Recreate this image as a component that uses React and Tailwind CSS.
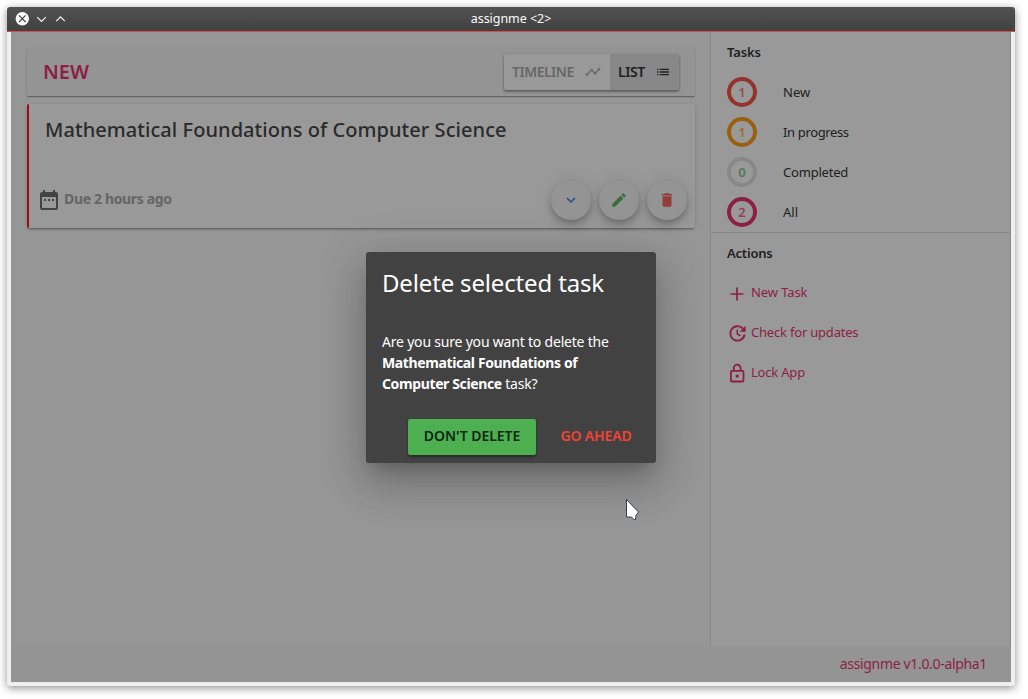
import React from "react";
import { MdTimeline, MdDateRange, MdDelete, MdEdit, MdList } from "react-icons/md";

const tasks = [
  { n: 1, label: "New", ring: "border-[#f44336]", text: "text-[#f44336]" },
  { n: 1, label: "In progress", ring: "border-[#ff9800]", text: "text-[#ff9800]", spacing: "tracking-[-0.36px]" },
  { n: 0, label: "Completed", ring: "border-[#e0e0e0]", text: "text-[#4caf50]", spacing: "tracking-[-0.2px]" },
  { n: 2, label: "All", ring: "border-[#e91e63]", text: "text-[#e91e63]" },
];

const fab =
  "flex h-10 w-10 items-center justify-center rounded-full bg-[#f5f5f5] shadow-[0_3px_5px_-1px_rgba(0,0,0,.2),0_6px_10px_rgba(0,0,0,.14),0_1px_18px_rgba(0,0,0,.12)]";

function TitleBar() {
  return (
    <div className="flex h-[25px] shrink-0 items-center rounded-t-[3px] border-b border-[#dc4b43] bg-linear-to-b from-[#525252] to-[#414141] pl-2">
      <div className="flex w-[52px] items-center gap-[6px]">
        <svg className="h-[14px] w-[14px] shrink-0" viewBox="0 0 14 14">
          <circle cx="7.3" cy="6.7" r="6.700" fill="#fcfcfc" />
          <path d="M4 3.400l6.600 6.600M10.600 3.400l-6.600 6.600" stroke="#454545" strokeWidth="1.200" />
        </svg>
        <svg className="h-[13px] w-[13px] shrink-0" viewBox="0 0 13 13" fill="none" stroke="#f4f4f4" strokeWidth="1.200">
          <path d="M2.200 4.200L6.500 8.500l4.300-4.300" />
        </svg>
        <svg className="h-[13px] w-[13px] shrink-0" viewBox="0 0 13 13" fill="none" stroke="#f4f4f4" strokeWidth="1.200">
          <path d="M2.200 8.200L6.500 3.900l4.300 4.300" />
        </svg>
      </div>
      <span className="flex-1 pr-[60px] text-center text-[12.5px] leading-[22px] tracking-[-0.05px] text-[#fcfcfc]">assignme &lt;2&gt;</span>
    </div>
  );
}

function Main() {
  return (
    <main className="flex w-[699px] shrink-0 flex-col gap-2 p-4 pr-[15px]">
      <header className="flex h-12 w-[668px] items-center justify-between bg-[#f5f5f5] px-4 shadow-[0_2px_1px_-1px_rgba(0,0,0,.2),0_1px_1px_rgba(0,0,0,.14),0_1px_3px_rgba(0,0,0,.12)]">
        <h1 className="text-[20px] font-semibold text-[#e91e63]">NEW</h1>
        <div className="flex h-9 w-[175px] rounded-[2px] bg-white shadow-[0_1px_3px_rgba(0,0,0,.35),0_2px_2px_rgba(0,0,0,.2)]">
          <button className="flex w-[106px] items-center pl-2 text-[14px] font-semibold text-[#a3a3a3]">
            <span className="w-[73px] pb-[2px] text-left tracking-[-0.5px]">TIMELINE</span>
            <MdTimeline className="h-4 w-4" />
          </button>
          <button className="flex w-[69px] items-center rounded-r-[2px] bg-[#dedede] pl-2 text-[14px] font-semibold text-[#212121]">
            <span className="w-[37px] pb-[2px] text-left tracking-[-0.4px]">LIST</span>
            <MdList className="h-4 w-4" />
          </button>
        </div>
      </header>
      <section className="flex h-[124px] w-[668px] flex-col justify-between rounded-[2px] border-l-2 border-[#ff0000] bg-white shadow-[0_3px_1px_-2px_rgba(0,0,0,.2),0_2px_2px_rgba(0,0,0,.14),0_1px_5px_rgba(0,0,0,.12)]">
        <h2 className="pt-[11px] pl-4 text-[20px] leading-[30px] font-medium tracking-[0.06px] whitespace-nowrap text-[#333]">
          Mathematical Foundations of Computer Science
        </h2>
        <div className="flex h-14 items-center justify-between pr-2 pl-2">
          <div className="flex items-center">
            <MdDateRange className="h-6 w-6 text-[#616161]" />
            <span className="ml-[3px] pb-[3px] text-[14px] font-bold tracking-[-0.35px] text-[#a0a0a0]">Due 2 hours ago</span>
          </div>
          <div className="flex gap-2">
            <button className={fab}>
              <svg className="h-[18px] w-[18px]" viewBox="0 0 24 24" fill="#2174d6">
                <path d="M7.410 8.580L12 13.170l4.590-4.590L18 10l-6 6-6-6z" />
              </svg>
            </button>
            <button className={fab}><MdEdit className="h-[18px] w-[18px] text-[#4caf50]" /></button>
            <button className={fab}><MdDelete className="h-[18px] w-[18px] text-[#f4574c]" /></button>
          </div>
        </div>
      </section>
    </main>
  );
}

function Sidebar() {
  return (
    <aside className="flex flex-1 flex-col border-x border-[#dfdfdf] bg-white text-[13px] text-[#212121]">
      <h3 className="h-10 pl-4 leading-[41px] font-semibold tracking-[-0.1px]">Tasks</h3>
      <ul className="h-[161px] border-b border-[#dfdfdf]">
        {tasks.map((t) => (
          <li key={t.label} className="flex h-10 items-center pl-4">
            <span className={"flex h-[30px] w-[30px] items-center justify-center rounded-full border-4 text-[13px] " + t.ring}>
              <span className={"pt-px font-semibold opacity-75 " + t.text}>{t.n}</span>
            </span>
            <span className={"ml-[26px] pt-[2px] " + (t.spacing || "")}>{t.label}</span>
          </li>
        ))}
      </ul>
      <h3 className="h-10 pl-4 leading-[41px] font-semibold tracking-[-0.2px]">Actions</h3>
      <ul className="text-[#e91e63]">
        <li className="flex h-10 items-center pl-[14px]">
          <svg className="mt-[2px] h-6 w-6" viewBox="0 0 24 24" fill="none" stroke="currentColor" strokeWidth="1.700"><path d="M12 5.500v13M5.500 12h13" /></svg>
          <span className="ml-[2px] tracking-[-0.1px]">New Task</span>
        </li>
        <li className="flex h-10 items-center pl-[14px]">
          <svg className="h-6 w-6" viewBox="0 0 24 24" fill="none" stroke="currentColor" strokeWidth="1.900">
            <path d="M17.800 7.500A7.200 7.200 0 1 0 19.600 13.500" />
            <path d="M20.700 4.800v6h-6z" fill="currentColor" stroke="none" />
            <path d="M12.300 8.500v4.500l3.300 1.900" strokeWidth="1.500" />
          </svg>
          <span className="ml-[2px] tracking-[-0.2px]">Check for updates</span>
        </li>
        <li className="flex h-10 items-center pl-[14px]">
          <svg className="h-6 w-6" viewBox="0 0 24 24" fill="none" stroke="currentColor" strokeWidth="1.800">
            <rect x="5.900" y="9.900" width="12.600" height="10.600" rx="1" />
            <path d="M8.800 9.900V7a3.400 3.400 0 0 1 6.800 0v2.900" />
            <circle cx="12.200" cy="15.100" r="1.700" fill="currentColor" stroke="none" />
          </svg>
          <span className="ml-[2px] tracking-[-0.2px]">Lock App</span>
        </li>
      </ul>
    </aside>
  );
}

function Dialog() {
  return (
    <div className="absolute top-[220px] left-[355px] flex h-[211px] w-[290px] flex-col rounded-[3px] bg-[#424242] px-4 text-white shadow-[0_11px_15px_-7px_rgba(0,0,0,.2),0_24px_38px_3px_rgba(0,0,0,.14),0_9px_46px_8px_rgba(0,0,0,.12)]">
      <h2 className="h-[79px] pt-[15px] text-[24px] leading-[32px] tracking-[-0.16px] whitespace-nowrap">Delete selected task</h2>
      <div className="h-[88px] text-[14px] leading-[21px] whitespace-nowrap">
        <p className="tracking-[-0.2px]">Are you sure you want to delete the</p>
        <p className="font-bold tracking-[-0.38px]">Mathematical Foundations of</p>
        <p className="tracking-[-0.2px]"><b className="tracking-[-0.38px]">Computer Science</b> task?</p>
      </div>
      <div className="flex text-[14px] font-semibold whitespace-nowrap">
        <button className="ml-[26px] flex h-9 w-32 shrink-0 items-center justify-center rounded-[2px] bg-[#4caf50] pb-[3px] tracking-[-0.05px] text-[#142614] shadow-[0_2px_3px_rgba(0,0,0,.4)]">DON'T DELETE</button>
        <button className="ml-2 flex h-9 w-[104px] shrink-0 items-center justify-center pb-[3px] tracking-[-0.15px] text-[#f44336]">GO AHEAD</button>
      </div>
    </div>
  );
}

export default function App() {
  return (
    <div className="h-[699px] w-[1028px] overflow-hidden bg-white pt-[7px] pl-[7px] font-['Noto_Sans',sans-serif]">
      <div className="flex h-[679px] w-[1008px] flex-col rounded-[3px] bg-[#efefef] shadow-[0_2px_8px_rgba(0,0,0,.45)]">
        <TitleBar />
        <div className="relative mx-1 flex h-[650px] flex-col bg-[#fafafa]">
          <div className="flex flex-1">
            <Main />
            <Sidebar />
          </div>
          <footer className="flex h-9 items-center justify-end bg-[#f5f5f5] pr-[24px] pb-[2px] text-[14px] tracking-[-0.33px] text-[#e91e63]">assignme v1.0.0-alpha1</footer>
          <div className="absolute inset-0 bg-[#212121]/46" />
          <Dialog />
          <svg className="absolute top-[466px] left-[614px] h-6 w-4" viewBox="0 0 16 24">
            <path d="M1.500 1.500v17.500h5l2.500 2.500h1.500l.5-4 2.500-3.500z" fill="#fff" stroke="#333c42" />
          </svg>
        </div>
      </div>
    </div>
  );
}
